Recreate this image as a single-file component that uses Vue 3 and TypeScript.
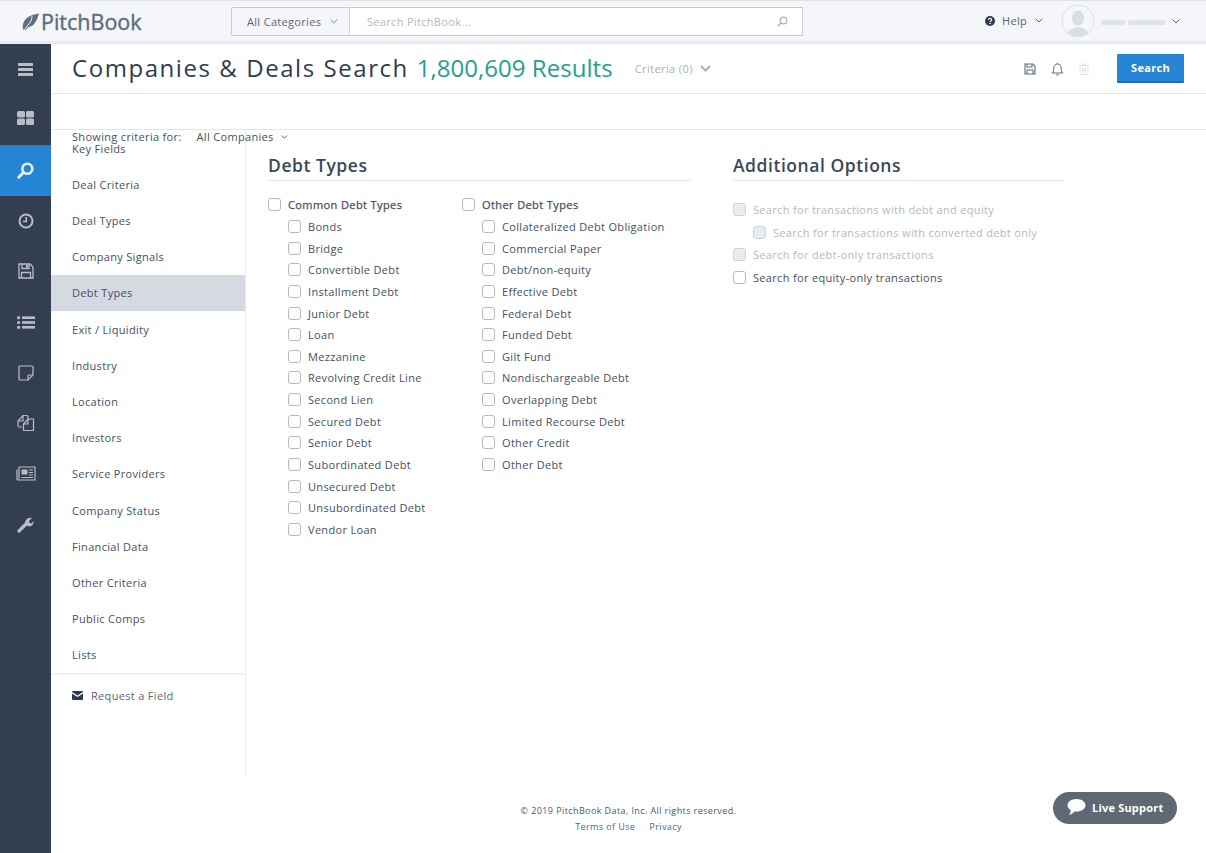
<template>
  <div class="page">
    <header class="topbar">
      <div class="logo">
        <svg class="logo-leaf" width="17" height="17" viewBox="0 0 17 17"><path d="M1 16.500C-.2 11 2.500 5.500 8 3c3-1.400 6-2 9-2.500-1 2.500-1.300 5.300-3 7.500-1.200 2.500-3 5-5.500 5.600-2 .5-3.500 1.300-4 2.900z" fill="#5f6f83"/><path d="M3.200 16C4.500 13 7.500 11 9 8c.8-1.800 1-3.800 1-5.500" fill="none" stroke="#f5f6f9" stroke-width=".9"/></svg>
        <span>PitchBook</span>
      </div>
      <div class="search-group">
        <div class="category">All Categories
          <svg class="chev" width="8" height="5" viewBox="0 0 8 5"><path d="M.7.7 4 4 7.300.7" fill="none" stroke="#a3abb6" stroke-width="1.100"/></svg>
        </div>
        <div class="search-box">
          <span>Search PitchBook...</span>
          <svg width="11" height="11" viewBox="0 0 11 11"><circle cx="6.500" cy="4.500" r="3.400" fill="none" stroke="#a8afb9" stroke-width="1.200"/><path d="M4 7 1 10" stroke="#a8afb9" stroke-width="1.500"/></svg>
        </div>
      </div>
      <div class="help">
        <svg width="10" height="10" viewBox="0 0 10 10"><circle cx="5" cy="5" r="5" fill="#2e3b4e"/><path d="M3.400 3.900C3.500 2.900 4.200 2.400 5 2.400c1 0 1.700.6 1.700 1.400 0 1.200-1.500 1.100-1.500 2.100" fill="none" stroke="#fff" stroke-width="1.100"/><rect x="4.500" y="6.700" width="1.300" height="1.300" fill="#fff"/></svg>
        <span>Help</span>
        <svg width="8" height="5" viewBox="0 0 8 5"><path d="M.7.7 4 4 7.300.7" fill="none" stroke="#5a6675" stroke-width="1"/></svg>
      </div>
      <div class="user">
        <svg width="34" height="34" viewBox="0 0 34 34"><circle cx="17" cy="17" r="16" fill="#f6f7f9" stroke="#dfe2e7"/><clipPath id="av"><circle cx="17" cy="17" r="15.500"/></clipPath><g clip-path="url(#av)" fill="#d9dde4"><ellipse cx="17" cy="14" rx="6" ry="7.500"/><ellipse cx="17" cy="31" rx="11" ry="7.500"/></g></svg>
        <i class="ph short"></i>
        <i class="ph long"></i>
        <svg width="8" height="5" viewBox="0 0 8 5"><path d="M.7.7 4 4 7.300.7" fill="none" stroke="#5a6675" stroke-width="1"/></svg>
      </div>
    </header>

    <div class="body">
      <aside class="rail">
        <div class="rail-item">
          <svg width="16" height="13" viewBox="0 0 16 13" fill="#b9bec6"><rect width="15" height="3" y="0" rx=".5"/><rect width="15" height="3" y="5" rx=".5"/><rect width="15" height="3" y="10" rx=".5"/></svg>
        </div>
        <div class="rail-item grid-item">
          <svg width="17" height="14" viewBox="0 0 17 14" fill="#b9bec6"><rect width="8" height="6.500" rx="1.500"/><rect x="9" width="8" height="6.500" rx="1.500"/><rect y="7.500" width="8" height="6.500" rx="1.500"/><rect x="9" y="7.500" width="8" height="6.500" rx="1.500"/></svg>
        </div>
        <div class="rail-item active">
          <svg width="17" height="17" viewBox="0 0 17 17"><circle cx="10.300" cy="6.700" r="5" fill="none" stroke="#e6f0f9" stroke-width="2.600"/><path d="M6.500 10.500 1.800 15.200" stroke="#e6f0f9" stroke-width="3" stroke-linecap="round"/></svg>
        </div>
        <div class="rail-item">
          <svg width="16" height="16" viewBox="0 0 16 16"><circle cx="8" cy="8" r="6.500" fill="none" stroke="#b9bec6" stroke-width="2"/><path d="M8.300 4v4.500H5" fill="none" stroke="#b9bec6" stroke-width="1.500"/></svg>
        </div>
        <div class="rail-item">
          <svg width="16" height="16" viewBox="0 0 16 16" fill="none" stroke="#b9bec6" stroke-width="1.300"><path d="M1 1h11l3 3v11H1z"/><path d="M4 1v4.500h7V1" /><path d="M3.500 15V9.500h9V15"/><rect x="8" y="2" width="2" height="2.500" fill="#b9bec6" stroke="none"/></svg>
        </div>
        <div class="rail-item">
          <svg width="18" height="13" viewBox="0 0 18 13" fill="#b9bec6"><circle cx="1.600" cy="1.700" r="1.600"/><circle cx="1.600" cy="6.500" r="1.600"/><circle cx="1.600" cy="11.300" r="1.600"/><rect x="5" y=".4" width="13" height="2.600"/><rect x="5" y="5.200" width="13" height="2.600"/><rect x="5" y="10" width="13" height="2.600"/></svg>
        </div>
        <div class="rail-item">
          <svg width="16" height="16" viewBox="0 0 16 16" fill="none" stroke="#b9bec6" stroke-width="1.200"><path d="M10 15H2a1 1 0 0 1-1-1V2a1 1 0 0 1 1-1h12a1 1 0 0 1 1 1v8z"/><path d="M10 15v-4a1 1 0 0 1 1-1h4" /></svg>
        </div>
        <div class="rail-item">
          <svg width="18" height="18" viewBox="0 0 18 18" fill="none" stroke="#b9bec6" stroke-width="1.200"><path d="M5 13H2.500Q1 13 1 11.500V7l5-5.500h3.500Q11 1.500 11 3v2"/><path d="M1 7h5V1.500"/><path d="M6.500 16.500V10l4.500-5h5.500v11.500z"/><path d="M6.500 10H11V5"/></svg>
        </div>
        <div class="rail-item">
          <svg width="20" height="15" viewBox="0 0 20 15" fill="none" stroke="#b9bec6" stroke-width="1.200"><path d="M3 1h16v13H2Q1 14 1 13V3.500"/><path d="M3 1v12"/><rect x="5.500" y="3.500" width="6" height="5" fill="#b9bec6" stroke="none"/><path d="M13 4h4M13 6.500h4M13 9h4M5.500 11.500H17"/></svg>
        </div>
        <div class="rail-item">
          <svg width="17" height="17" viewBox="0 0 17 17"><path d="M2 15 9.500 7.500" stroke="#b9bec6" stroke-width="3.200" stroke-linecap="round"/><path d="M8 8.500C7.500 4 11 1 15 2l-3 3 .5 2 2 .5 2-2.500C17 9.500 13 11.500 9.500 9.500z" fill="#b9bec6"/></svg>
        </div>
      </aside>

      <main class="main">
        <div class="title-row">
          <h1>Companies &amp; Deals Search <span class="count">1,800,609 Results</span></h1>
          <div class="criteria">Criteria (0)
            <svg width="11" height="7" viewBox="0 0 11 7"><path d="M1 1l4.500 4.500L10 1" fill="none" stroke="#a9b0ba" stroke-width="2"/></svg>
          </div>
          <div class="tools">
            <svg width="12" height="12" viewBox="0 0 12 12" fill="none" stroke="#5f6d80" stroke-width="1.100"><path d="M1 1h8l2 2v8H1z"/><path d="M3 1v3h5V1"/><path d="M3 11V7h6v4"/></svg>
            <svg width="13" height="14" viewBox="0 0 13 14" fill="none" stroke="#5f6d80" stroke-width="1"><path d="M1 11c1.500-1.500 1.800-2.500 1.800-5 0-2.300 1.500-4 3.700-4s3.700 1.700 3.700 4c0 2.500.3 3.500 1.800 5z"/><path d="M5 12.500c.5.800 2.500.800 3 0M6.500 2V.8"/></svg>
            <svg width="10" height="12" viewBox="0 0 10 12" fill="none" stroke="#dfe2e6" stroke-width="1"><path d="M0 2.500h10M3.500 2.500V1h3v1.500M1 2.500V11.500h8V2.500M3.500 4.500v5M5 4.500v5M6.500 4.500v5"/></svg>
          </div>
          <button class="search-btn">Search</button>
        </div>
        <div class="blank-row"></div>

        <div class="content">
          <nav class="nav">
            <div class="showing">
              <div class="showing-line"><span>Showing criteria for:</span><span class="all">All Companies</span>
                <svg width="7" height="4" viewBox="0 0 8 5"><path d="M.7.7 4 4 7.300.7" fill="none" stroke="#4a5768" stroke-width="1.100"/></svg>
              </div>
              <div class="key-fields">Key Fields</div>
            </div>
            <ul>
              <li v-for="item in navItems" :key="item" :class="{ current: item === 'Debt Types' }">{{ item }}</li>
            </ul>
            <div class="request">
              <svg width="11" height="9" viewBox="0 0 11 9"><path d="M0 1a1 1 0 0 1 1-1h9a1 1 0 0 1 1 1L5.500 4.500z" fill="#2e3b4e"/><path d="M0 2.400 5.500 5.900 11 2.400V8a1 1 0 0 1-1 1H1a1 1 0 0 1-1-1z" fill="#2e3b4e"/></svg>
              Request a Field
            </div>
          </nav>

          <section class="panels">
            <div class="panel debt">
              <h2>Debt Types</h2>
              <div class="debt-cols">
                <div v-for="group in debtGroups" :key="group.title" class="debt-col">
                  <label class="check group-title"><i class="box"></i>{{ group.title }}</label>
                  <label v-for="opt in group.options" :key="opt" class="check child"><i class="box"></i>{{ opt }}</label>
                </div>
              </div>
            </div>
            <div class="panel options">
              <h2>Additional Options</h2>
              <div class="option-list">
                <label class="check off"><i class="box"></i>Search for transactions with debt and equity</label>
                <label class="check off child"><i class="box"></i>Search for transactions with converted debt only</label>
                <label class="check off"><i class="box"></i>Search for debt-only transactions</label>
                <label class="check"><i class="box"></i>Search for equity-only transactions</label>
              </div>
            </div>
          </section>
        </div>

        <footer class="footer">
          <div>© 2019 PitchBook Data, Inc. All rights reserved.</div>
          <div class="links"><a>Terms of Use</a><a>Privacy</a></div>
        </footer>
      </main>
    </div>

    <div class="live">
      <svg width="19" height="17" viewBox="0 0 19 17"><path d="M9.500 0C14.500 0 18.500 2.800 18.500 6.300S14.500 12.600 9.500 12.600c-.8 0-1.500 0-2.200-.2C6 14 4 15.500 2 15.800c1-1.200 1.800-2.700 1.700-4.700C1.800 10 .5 8.300.5 6.300.5 2.800 4.500 0 9.500 0z" fill="#fff"/></svg>
      Live Support
    </div>
  </div>
</template>

<script setup lang="ts">
const navItems: string[] = [
  'Deal Criteria',
  'Deal Types',
  'Company Signals',
  'Debt Types',
  'Exit / Liquidity',
  'Industry',
  'Location',
  'Investors',
  'Service Providers',
  'Company Status',
  'Financial Data',
  'Other Criteria',
  'Public Comps',
  'Lists',
]

const debtGroups: { title: string; options: string[] }[] = [
  {
    title: 'Common Debt Types',
    options: [
      'Bonds',
      'Bridge',
      'Convertible Debt',
      'Installment Debt',
      'Junior Debt',
      'Loan',
      'Mezzanine',
      'Revolving Credit Line',
      'Second Lien',
      'Secured Debt',
      'Senior Debt',
      'Subordinated Debt',
      'Unsecured Debt',
      'Unsubordinated Debt',
      'Vendor Loan',
    ],
  },
  {
    title: 'Other Debt Types',
    options: [
      'Collateralized Debt Obligation',
      'Commercial Paper',
      'Debt/non-equity',
      'Effective Debt',
      'Federal Debt',
      'Funded Debt',
      'Gilt Fund',
      'Nondischargeable Debt',
      'Overlapping Debt',
      'Limited Recourse Debt',
      'Other Credit',
      'Other Debt',
    ],
  },
]
</script>

<style>
html,
body {
  margin: 0;
  background: #fff;
}
</style>

<style scoped>
.page {
  position: relative;
  width: 1206px;
  height: 853px;
  overflow: hidden;
  display: flex;
  flex-direction: column;
  font-family: "Open Sans", "Liberation Sans", sans-serif;
  font-size: 11px;
  letter-spacing: 0.32px;
  color: #445063;
}

.topbar {
  height: 40px;
  flex: none;
  display: flex;
  align-items: center;
  background: #f5f6f9;
  border-top: 1px solid #dfe3ea;
  border-bottom: 3px solid #e9ebf0;
}

.logo {
  width: 231px;
  display: flex;
  align-items: center;
  gap: 2px;
  padding-left: 22px;
  box-sizing: border-box;
  font-size: 21.500px;
  letter-spacing: 0;
  color: #5c6c81;
  -webkit-text-stroke: 0.4px #5c6c81;
}

.search-group {
  display: flex;
  height: 29px;
  margin-top: 1px;
}

.category {
  width: 119px;
  box-sizing: border-box;
  display: flex;
  align-items: center;
  gap: 9px;
  padding: 0 0 1px 15px;
  border: 1px solid #c7ccd4;
  color: #5c6878;
  border-radius: 2px 0 0 2px;
}

.search-box {
  width: 453px;
  box-sizing: border-box;
  display: flex;
  align-items: center;
  justify-content: space-between;
  padding: 0 14px 1px 17px;
  background: #fff;
  border: 1px solid #c7ccd4;
  border-left: 0;
  color: #b2b7c0;
}

.help {
  margin: 0 0 1px 182px;
  display: flex;
  align-items: center;
  gap: 7px;
  color: #566274;
}

.help span {
  margin-right: 1px;
}

.user {
  margin-left: 18px;
  display: flex;
  align-items: center;
}

.ph {
  height: 5px;
  background: #e0e3e8;
  border-radius: 2px;
  margin-top: 3px;
}

.ph.short {
  width: 24px;
  margin-left: 6px;
}

.ph.long {
  width: 38px;
  margin: 3px 6px 0 3px;
}

.body {
  flex: 1;
  display: flex;
  min-height: 0;
}

.rail {
  width: 51px;
  flex: none;
  background: #333f50;
  display: flex;
  flex-direction: column;
}

.rail-item {
  height: 50.550px;
  display: flex;
  align-items: center;
  justify-content: center;
}

.grid-item svg {
  margin-bottom: 3px;
}

.rail-item.active {
  background: #2584d3;
}

.main {
  flex: 1;
  display: flex;
  flex-direction: column;
  min-width: 0;
}

.title-row {
  height: 49px;
  flex: none;
  display: flex;
  align-items: center;
  padding-left: 21px;
  border-bottom: 1px solid #e3e5e9;
}

h1 {
  margin: 0 0 2px;
  font-size: 24px;
  font-weight: 400;
  letter-spacing: 1.560px;
  color: #2f3c4f;
  white-space: nowrap;
}

.count {
  color: #23a08f;
  letter-spacing: 0.05px;
}

.criteria {
  margin-left: 22px;
  display: flex;
  align-items: center;
  gap: 7px;
  color: #a9b0ba;
  letter-spacing: 0.4px;
  white-space: nowrap;
}

.tools {
  margin-left: auto;
  display: flex;
  align-items: center;
  gap: 15px;
}

.search-btn {
  margin: 0 22px 0 28px;
  width: 67px;
  height: 29px;
  border: 0;
  border-bottom: 2px solid #1e6fb5;
  border-radius: 1px;
  background: #2885d5;
  color: #fff;
  font-family: inherit;
  font-size: 11px;
  font-weight: 700;
  letter-spacing: 0.3px;
}

.blank-row {
  height: 35px;
  flex: none;
  border-bottom: 1px solid #e3e5e9;
}

.content {
  height: 646px;
  flex: none;
  display: flex;
}

.nav {
  width: 195px;
  flex: none;
  box-sizing: border-box;
  border-right: 1px solid #e9ebef;
  display: flex;
  flex-direction: column;
}

.showing {
  height: 35.300px;
  flex: none;
  padding: 1px 0 0 21px;
  line-height: 12px;
}

.showing-line {
  display: flex;
  align-items: center;
  white-space: nowrap;
}

.showing-line svg {
  flex: none;
}

.all {
  margin: 0 7px 0 15px;
}

.nav ul {
  margin: 0;
  padding: 0;
  list-style: none;
  border-bottom: 2px solid #eff0f4;
}

.nav li {
  height: 36.200px;
  display: flex;
  align-items: center;
  padding-left: 21px;
}

.nav li.current {
  background: #d5d9e2;
}

.request {
  display: flex;
  align-items: center;
  gap: 8px;
  padding: 13px 0 0 21px;
  color: #5a6576;
}

.panels {
  flex: 1;
  display: flex;
  padding-top: 25px;
}

.panel h2 {
  margin: 0;
  height: 25px;
  line-height: 20px;
  font-size: 17.500px;
  font-weight: 600;
  letter-spacing: 0.55px;
  color: #3b4759;
  border-bottom: 1px solid #e3e5e9;
}

.debt {
  width: 423px;
  margin-left: 22px;
}

.options {
  width: 331px;
  margin-left: 42px;
}

.debt-cols {
  display: flex;
  padding-top: 13px;
}

.debt-col {
  width: 194px;
}

.check {
  display: flex;
  align-items: center;
  height: 21.650px;
  white-space: nowrap;
}

.group-title {
  letter-spacing: 0.4px;
  -webkit-text-stroke: 0.25px #445063;
}

.box {
  width: 11px;
  height: 11px;
  flex: none;
  margin-right: 7px;
  background: #fff;
  border: 1px solid #b4bac3;
  border-radius: 3px;
}

.child {
  padding-left: 20px;
}

.option-list {
  padding-top: 17px;
}

.option-list .check {
  height: 22.700px;
}

.off {
  color: #b3b9c3;
}

.off .box {
  background: #e8ebf1;
  border-color: #cdd2da;
}

.footer {
  padding-top: 27px;
  text-align: center;
  font-size: 9px;
  line-height: 16px;
  letter-spacing: 0.4px;
  color: #4c5868;
  width: 1155px;
  box-sizing: border-box;
}

.links a {
  color: #2a6fae;
  margin: 0 7px;
}

.live {
  position: absolute;
  left: 1053px;
  top: 792px;
  width: 124px;
  height: 32px;
  box-sizing: border-box;
  padding: 0 0 1px 14px;
  display: flex;
  align-items: center;
  gap: 6px;
  border-radius: 16px;
  background: #5f6976;
  color: #fff;
  font-weight: 700;
  letter-spacing: 0.2px;
}
</style>
